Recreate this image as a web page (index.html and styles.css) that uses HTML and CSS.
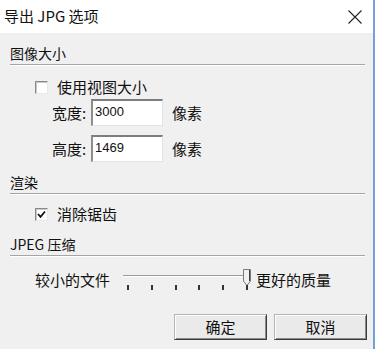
FILE: index.html
```html
<!DOCTYPE html>
<html lang="zh-CN">
<head>
<meta charset="utf-8">
<title>导出 JPG 选项</title>
<link rel="stylesheet" href="styles.css">
</head>
<body>
<div class="window">
  <div class="titlebar">
    <span class="title">导出 JPG 选项</span>
    <svg class="close" width="14" height="14" viewBox="0 0 14 14"><path d="M0.5 0.5 L13.5 13.5 M13.5 0.5 L0.5 13.5" stroke="#222" stroke-width="1.1" fill="none"/></svg>
  </div>
  <div class="content">
    <div class="heading">图像大小</div>
    <div class="check-row first">
      <span class="checkbox"></span>
      <span>使用视图大小</span>
    </div>
    <div class="field-row">
      <span class="field-label">宽度:</span>
      <span class="input">3000</span>
      <span class="unit">像素</span>
    </div>
    <div class="field-row second">
      <span class="field-label">高度:</span>
      <span class="input">1469</span>
      <span class="unit">像素</span>
    </div>
    <div class="heading">渲染</div>
    <div class="check-row">
      <span class="checkbox checked"><svg width="9" height="9" viewBox="0 0 9 9"><path d="M1 4 L3.5 6.8 L8 1.5" stroke="#111" stroke-width="1.8" fill="none"/></svg></span>
      <span>消除锯齿</span>
    </div>
    <div class="heading">JPEG 压缩</div>
    <div class="slider-row">
      <span class="slider-label">较小的文件</span>
      <div class="slider">
        <div class="track"></div>
        <svg class="thumb" width="8" height="17" viewBox="0 0 8 17"><path d="M0.5 0.5 H7.5 V12 L4 16.5 L0.5 12 Z" fill="#f0f0f0" stroke="#7a7a7a"/><path d="M6.5 1 V12" stroke="#404040"/></svg>
        <div class="ticks">
          <span></span><span></span><span></span><span></span><span></span><span></span>
        </div>
      </div>
      <span class="slider-label right">更好的质量</span>
    </div>
    <div class="buttons">
      <button class="btn">确定</button>
      <button class="btn">取消</button>
    </div>
  </div>
</div>
</body>
</html>
```
FILE: styles.css
```css
* { box-sizing: border-box; }
html, body {
  margin: 0;
  padding: 0;
  background: #ffffff;
}
body {
  width: 378px;
  height: 349px;
  overflow: hidden;
  font-family: "Noto Sans CJK SC", "Noto Sans", sans-serif;
  color: #111;
}
.window {
  width: 375px;
  height: 349px;
  background: #f0f0f0;
  border-right: 2px solid #6fa2d8;
  display: flex;
  flex-direction: column;
}
.titlebar {
  height: 33px;
  background: #ffffff;
  display: flex;
  align-items: center;
  justify-content: space-between;
  padding: 0 11px 1px 4px;
}
.title {
  font-size: 15px;
  line-height: 20px;
}
.close { display: block; margin-top: 1px; }
.content {
  padding: 0 8px 0 10px;
  font-size: 15px;
}
.heading {
  font-size: 14px;
  line-height: 21px;
  padding-top: 10px;
  border-bottom: 1px solid #a5a5a5;
  box-shadow: 0 1px 0 #ffffff;
}
.heading + .check-row.first { margin-top: 12px; }
.check-row {
  display: flex;
  align-items: center;
  height: 20px;
  margin-top: 10px;
  padding-left: 25px;
  gap: 9px;
  line-height: 20px;
}
.checkbox {
  width: 13px;
  height: 13px;
  background: #fff;
  border: 1px solid;
  border-color: #8a8a8a #e8e8e8 #e8e8e8 #8a8a8a;
  box-shadow: inset 1px 1px 0 #c8c8c8;
  display: flex;
  align-items: center;
  justify-content: center;
}
.checkbox svg { display: block; }
.field-row {
  display: flex;
  align-items: center;
  margin-top: 2px;
  padding-left: 42px;
  line-height: 20px;
}
.field-row.second { margin-top: 9px; }
.field-label { width: 39px; }
.input {
  width: 72px;
  height: 27px;
  background: #fff;
  border-style: solid;
  border-width: 2px 1px 1px 2px;
  border-color: #7d7d7d #e3e3e3 #e3e3e3 #8d8d8d;
  font-size: 13px;
  line-height: 22px;
  padding-left: 2px;
  font-family: "Liberation Sans", "Noto Sans", sans-serif;
}
.unit { margin-left: 9px; }
.heading + .field-row { margin-top: 0; }
.slider-row {
  display: flex;
  align-items: flex-start;
  margin-top: 14px;
  padding-left: 25px;
  line-height: 20px;
}
.slider {
  position: relative;
  width: 128px;
  height: 24px;
  margin-left: 13px;
}
.track {
  position: absolute;
  left: 0;
  top: 5px;
  width: 121px;
  height: 2px;
  border-top: 1px solid #9a9a9a;
  border-bottom: 1px solid #ffffff;
}
.thumb {
  position: absolute;
  left: 120px;
  top: -1px;
}
.ticks {
  position: absolute;
  left: 4px;
  top: 15px;
  width: 121px;
  display: flex;
  justify-content: space-between;
}
.ticks span {
  width: 2px;
  height: 5px;
  background: #333;
}
.slider-label.right { margin-left: 5px; }
.buttons {
  display: flex;
  justify-content: flex-end;
  gap: 7px;
  margin-top: 20px;
  margin-right: -2px;
}
.btn {
  width: 93px;
  height: 26px;
  font-family: "Noto Sans CJK SC", "Noto Sans", sans-serif;
  font-size: 15px;
  line-height: 20px;
  color: #111;
  background: #eaeaea;
  border: 1px solid;
  border-color: #b4b4b4 #3c3c3c #3c3c3c #b4b4b4;
  box-shadow: inset 1px 1px 0 #ffffff, inset -1px -1px 0 #8a8a8a;
  padding: 0;
}
```
